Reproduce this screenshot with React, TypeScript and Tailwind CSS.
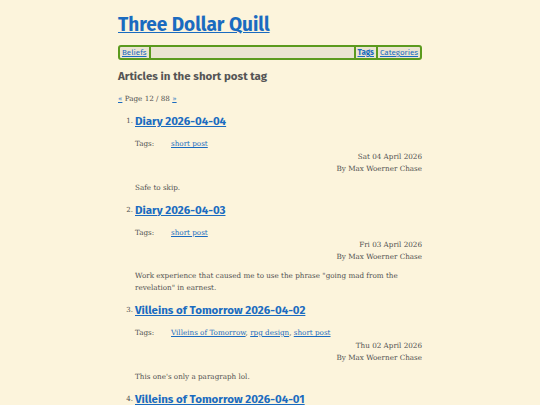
import React from 'react';

const sans = "font-['Fira_Sans','Lato','Open_Sans',sans-serif]";
const serif = "font-['Roboto_Slab','DejaVu_Serif',serif]";

type Post = {
  title: string;
  tags: string[];
  date: string;
  body: string;
};

const posts: Post[] = [
  { title: 'Diary 2026-04-04', tags: ['short post'], date: 'Sat 04 April 2026', body: 'Safe to skip.' },
  {
    title: 'Diary 2026-04-03',
    tags: ['short post'],
    date: 'Fri 03 April 2026',
    body: 'Work experience that caused me to use the phrase "going mad from the revelation" in earnest.',
  },
  {
    title: 'Villeins of Tomorrow 2026-04-02',
    tags: ['Villeins of Tomorrow', 'rpg design', 'short post'],
    date: 'Thu 02 April 2026',
    body: "This one's only a paragraph lol.",
  },
  { title: 'Villeins of Tomorrow 2026-04-01', tags: ['short post'], date: 'Wed 01 April 2026', body: '' },
];

const PostItem = ({ post, n }: { post: Post; n: number }) => (
  <li className="flex mt-[8px] first:mt-[8px]">
    <span className={`${serif} w-[17px] shrink-0 pr-[2px] text-right text-[7px] leading-[16px] text-[#4f4f4f]`}>{n}.</span>
    <div className="flex-1">
      <a href="#" className={`${sans} block text-[11.5px] font-bold leading-[16px] text-[#1a6bc0] underline`}>
        {post.title}
      </a>
      <div className={`${serif} mt-[9px] flex text-[7.2px] leading-[12px] text-[#4f4f4f]`}>
        <span className="w-[36px] shrink-0">Tags:</span>
        <span>
          {post.tags.map((t, i) => (
            <React.Fragment key={t}>
              <a href="#" className="text-[#1a6bc0] underline">{t}</a>
              {i < post.tags.length - 1 && ', '}
            </React.Fragment>
          ))}
        </span>
      </div>
      <div className={`${serif} mt-[0.5px] text-right text-[7.2px] leading-[12px] text-[#4f4f4f]`}>
        <div>{post.date}</div>
        <div>By Max Woerner Chase</div>
      </div>
      {post.body && (
        <p className={`${serif} mt-[7px] text-[7.2px] leading-[12px] text-[#4f4f4f]`}>{post.body}</p>
      )}
    </div>
  </li>
);

export default function App() {
  return (
    <div className="min-h-screen w-full bg-[#fcf4dc]">
      <div className="mx-auto w-[304px] pt-[13px]">
        <a href="#" className={`${sans} block text-[19px] font-bold leading-[24px] text-[#1a6bc0] underline`}>
          Three Dollar Quill
        </a>

        <nav className={`${sans} mt-[8px] flex h-[15px] items-stretch rounded-[3px] border-2 border-[#5b9a1e] bg-[#ebe4d1] text-[8px] leading-[11px]`}>
          <a href="#" className="border-r-2 border-[#5b9a1e] px-[2px] text-[#1a6bc0] underline">Beliefs</a>
          <div className="flex-1" />
          <a href="#" className="border-l-2 border-r-2 border-[#5b9a1e] px-[2px] font-bold text-[#1a6bc0] underline">Tags</a>
          <a href="#" className="px-[2px] text-[#1a6bc0] underline">Categories</a>
        </nav>

        <h2 className={`${sans} mt-[8px] text-[11.5px] font-bold leading-[16px] text-[#555]`}>
          Articles in the short post tag
        </h2>

        <p className={`${serif} mt-[9px] text-[7.2px] leading-[12px] text-[#4f4f4f]`}>
          <a href="#" className="text-[#1a6bc0] underline">«</a> Page 12 / 88{' '}
          <a href="#" className="text-[#1a6bc0] underline">»</a>
        </p>

        <ol>
          {posts.map((p, i) => (
            <PostItem key={p.title} post={p} n={i + 1} />
          ))}
        </ol>
      </div>
    </div>
  );
}
